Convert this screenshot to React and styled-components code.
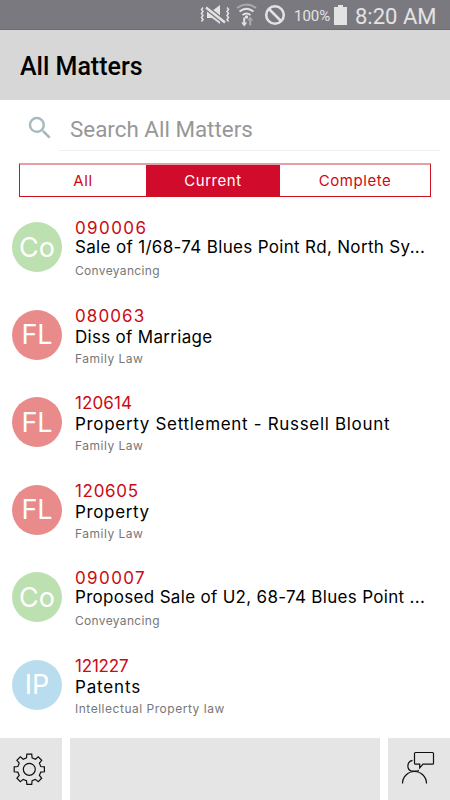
import React from 'react';
import styled, { createGlobalStyle } from 'styled-components';

// tracks: letter spacing of the number, the title and the type
const matters = [
  { number: '090006', title: 'Sale of 1/68-74 Blues Point Rd, North Sy...', type: 'Conveyancing', short: 'Co', color: '#bce0b0', wrapped: true, tracks: [1.4, 0.33, 0.33] },
  { number: '080063', title: 'Diss of Marriage', type: 'Family Law', short: 'FL', color: '#e88b8a', tracks: [1.1, 0.3, 0.5] },
  { number: '120614', title: 'Property Settlement - Russell Blount', type: 'Family Law', short: 'FL', color: '#e88b8a', tracks: [0.1, 0.68, 0.5] },
  { number: '120605', title: 'Property', type: 'Family Law', short: 'FL', color: '#e88b8a', tracks: [0.7, 0.65, 0.5] },
  { number: '090007', title: 'Proposed Sale of U2, 68-74 Blues Point ...', type: 'Conveyancing', short: 'Co', color: '#bce0b0', wrapped: true, tracks: [1.4, 0.31, 0.33] },
  { number: '121227', title: 'Patents', type: 'Intellectual Property law', short: 'IP', color: '#b9ddef', tracks: [-0.2, 0.85, 0.52] },
];

// outline of the eight toothed gear, centred on 0,0
const gearPath = () => {
  const points = [];
  for (let i = 0; i < 8; i++) {
    const a = (i * Math.PI) / 4;
    [[-0.24, 11.8], [-0.16, 15.3], [0.16, 15.3], [0.24, 11.8]].forEach(([d, r]) => {
      points.push(`${(Math.sin(a + d) * r).toFixed(2)} ${(-Math.cos(a + d) * r).toFixed(2)}`);
    });
  }
  return `M${points.join('L')}Z`;
};

export default function App() {
  return (
    <Screen>
      <GlobalStyle />
      <StatusBar>
        <StatusIcons />
        <Percent>100%</Percent>
        <Battery viewBox="0 0 13 20">
          <path d="M4 0h5v2h4v18H0V2h4z" />
        </Battery>
        <Clock>8:20 AM</Clock>
      </StatusBar>
      <Header>All Matters</Header>
      <Search>
        <SearchIcon viewBox="0 0 24 24">
          <path d="M15.5 14h-.79l-.28-.27A6.47 6.47 0 0 0 16 9.5 6.5 6.5 0 1 0 9.5 16c1.61 0 3.09-.59 4.23-1.57l.27.28v.79l5 4.99L20.49 19zm-6 0C7.01 14 5 11.99 5 9.5S7.01 5 9.5 5 14 7.01 14 9.5 11.99 14 9.5 14" />
        </SearchIcon>
        <Field>Search All Matters</Field>
      </Search>
      <Tabs>
        <Tab>All</Tab>
        <Tab $active>Current</Tab>
        <Tab>Complete</Tab>
      </Tabs>
      <List>
        {matters.map((m) => (
          <Row key={m.number}>
            <Avatar $color={m.color}>{m.short}</Avatar>
            <Details>
              <Number $track={m.tracks[0]}>{m.number}</Number>
              <Title $track={m.tracks[1]} $wrapped={m.wrapped}>{m.title}</Title>
              <Type $track={m.tracks[2]}>{m.type}</Type>
            </Details>
          </Row>
        ))}
      </List>
      <Footer>
        <FooterButton>
          <svg width="62" height="62" viewBox="0 0 62 62">
            <g transform="translate(29.3 31.3)">
              <path d={gearPath()} />
              <circle r="6" />
            </g>
          </svg>
        </FooterButton>
        <FooterButton />
        <FooterButton>
          <svg width="62" height="62" viewBox="0 0 62 62">
            <path d="M24.5 22.3A5.7 5.7 0 0 0 23.500 33.200M23.500 33.200H30L30.500 32" />
            <path d="M14.500 45.500a12 12 0 0 1 24 0" />
            <path d="M27.500 14.500h17q1 0 1 1v9.700q0 1-1 1H35L31.700 30v-3.800H27.500q-1 0-1-1v-9.700q0-1 1-1z" />
          </svg>
        </FooterButton>
      </Footer>
    </Screen>
  );
}

function StatusIcons() {
  return (
    <Glyphs viewBox="0 0 88 24">
      {/* muted with vibration */}
      <path d="M7 8h5l8-6v19l-8-6H7z" fill="#e3e3e3" />
      <path d="M6 4.500l19 15" stroke="#7b7980" strokeWidth="5" />
      <path d="M6 4.500l19 15" stroke="#e3e3e3" strokeWidth="2.400" />
      <path d="M3 4.500l-1.500 2 1.500 2-1.500 2 1.500 2-1.500 2 1.500 2-1.500 2M27 4.500l1.500 2-1.500 2 1.500 2-1.500 2 1.500 2-1.500 2 1.500 2" stroke="#e3e3e3" strokeWidth="1.500" fill="none" />
      {/* wifi */}
      <g fill="none" strokeWidth="2">
        <path d="M37 5q9.500-7 19 0" stroke="#aaa9ad" />
        <path d="M39.500 8.500q7-5.500 14 0M42.500 12q4-3 8 0" stroke="#e3e3e3" />
      </g>
      <circle cx="46.500" cy="14" r="1.700" fill="#e3e3e3" />
      <path d="M43.200 14.500h2v5h2l-3 4-3-4h2z" fill="#e3e3e3" />
      <path d="M49.200 22.500h2v-5h2l-3-4-3 4h2z" fill="#aaa9ad" />
      {/* do not disturb */}
      <circle cx="75" cy="12" r="8.800" fill="none" stroke="#e3e3e3" strokeWidth="2.500" />
      <path d="M69 6l12 12" stroke="#e3e3e3" strokeWidth="2.500" />
    </Glyphs>
  );
}

const GlobalStyle = createGlobalStyle`
  * {
    box-sizing: border-box;
  }
  body {
    margin: 0;
    background: #fff;
  }
`;

const Screen = styled.div`
  width: 450px;
  height: 800px;
  display: flex;
  flex-direction: column;
  overflow: hidden;
  background: #fff;
  font-family: Inter, 'Liberation Sans', sans-serif;
`;

const StatusBar = styled.div`
  height: 30px;
  flex: none;
  display: flex;
  align-items: center;
  padding-left: 200px;
  background: #7b7980;
  border-bottom: 1px solid #6c6a70;
  color: #e3e3e3;
  font-family: Roboto, sans-serif;
  white-space: nowrap;
`;

const Glyphs = styled.svg`
  width: 88px;
  height: 24px;
  flex: none;
  margin-top: 1px;
`;

const Percent = styled.span`
  width: 40px;
  margin-left: 6px;
  margin-top: 2px;
  font-size: 15px;
`;

const Battery = styled.svg`
  width: 13px;
  height: 20px;
  flex: none;
  margin-top: 1px;
  fill: #e3e3e3;
`;

const Clock = styled.span`
  margin-left: 8px;
  margin-top: 3px;
  font-size: 22px;
`;

const Header = styled.header`
  height: 70px;
  flex: none;
  display: flex;
  align-items: center;
  padding: 3px 20px 0;
  background: #d7d7d7;
  color: #000;
  font: 500 25px Roboto, sans-serif;
`;

const Search = styled.div`
  height: 51px;
  flex: none;
  display: flex;
  padding: 0 10px 0 25px;
`;

const SearchIcon = styled.svg`
  width: 30px;
  height: 30px;
  margin: 13px 4px 0 0;
  fill: #a9b8c0;
`;

const Field = styled.div`
  flex: 1;
  padding: 16px 0 0 11px;
  border-bottom: 1px solid #f0f0f0;
  color: #979797;
  font: 22.4px Roboto, sans-serif;
`;

const Tabs = styled.div`
  height: 34px;
  flex: none;
  display: grid;
  grid-template-columns: 126px 134px 150px;
  margin: 12px 19px 0;
  border: 1px solid #cf1020;
  border-top: 2px solid #e5a0a5;
`;

const Tab = styled.div`
  display: flex;
  align-items: center;
  justify-content: center;
  font-size: 15px;
  letter-spacing: 0.55px;
  color: ${(props) => (props.$active ? '#fff' : '#cb0a12')};
  background: ${(props) => (props.$active ? '#d00b2b' : '#fff')};
`;

const List = styled.div`
  flex: 1;
  padding-top: 6px;
`;

const Row = styled.div`
  height: 87.5px;
  display: flex;
  align-items: flex-start;
  padding: 19px 12px 0 12px;
`;

const Avatar = styled.div`
  width: 50px;
  height: 50px;
  flex: none;
  display: flex;
  align-items: center;
  justify-content: center;
  border-radius: 50%;
  background: ${(props) => props.$color};
  color: #fff;
  font-size: 27px;
`;

const Details = styled.div`
  flex: 1;
  min-width: 0;
  margin-left: 13px;
  white-space: nowrap;
`;

const Number = styled.div`
  height: 18px;
  line-height: 18px;
  margin-top: -3px;
  font-size: 17px;
  letter-spacing: ${(props) => props.$track}px;
  color: #cb0a12;
`;

const Title = styled.div`
  height: 20px;
  line-height: 20px;
  margin-top: ${(props) => (props.$wrapped ? '0' : '2px')};
  margin-bottom: ${(props) => (props.$wrapped ? '6px' : '4px')};
  font-size: 17px;
  letter-spacing: ${(props) => props.$track}px;
  color: #000;
`;

const Type = styled.div`
  height: 16px;
  line-height: 16px;
  font-size: 12px;
  letter-spacing: ${(props) => props.$track}px;
  color: #777;
`;

const Footer = styled.footer`
  height: 62px;
  flex: none;
  display: grid;
  grid-template-columns: 62px 310px 62px;
  gap: 8px;
`;

const FooterButton = styled.div`
  background: #e5e5e5;

  svg {
    display: block;
    fill: none;
    stroke: #111;
    stroke-width: 1.2;
  }
`;
